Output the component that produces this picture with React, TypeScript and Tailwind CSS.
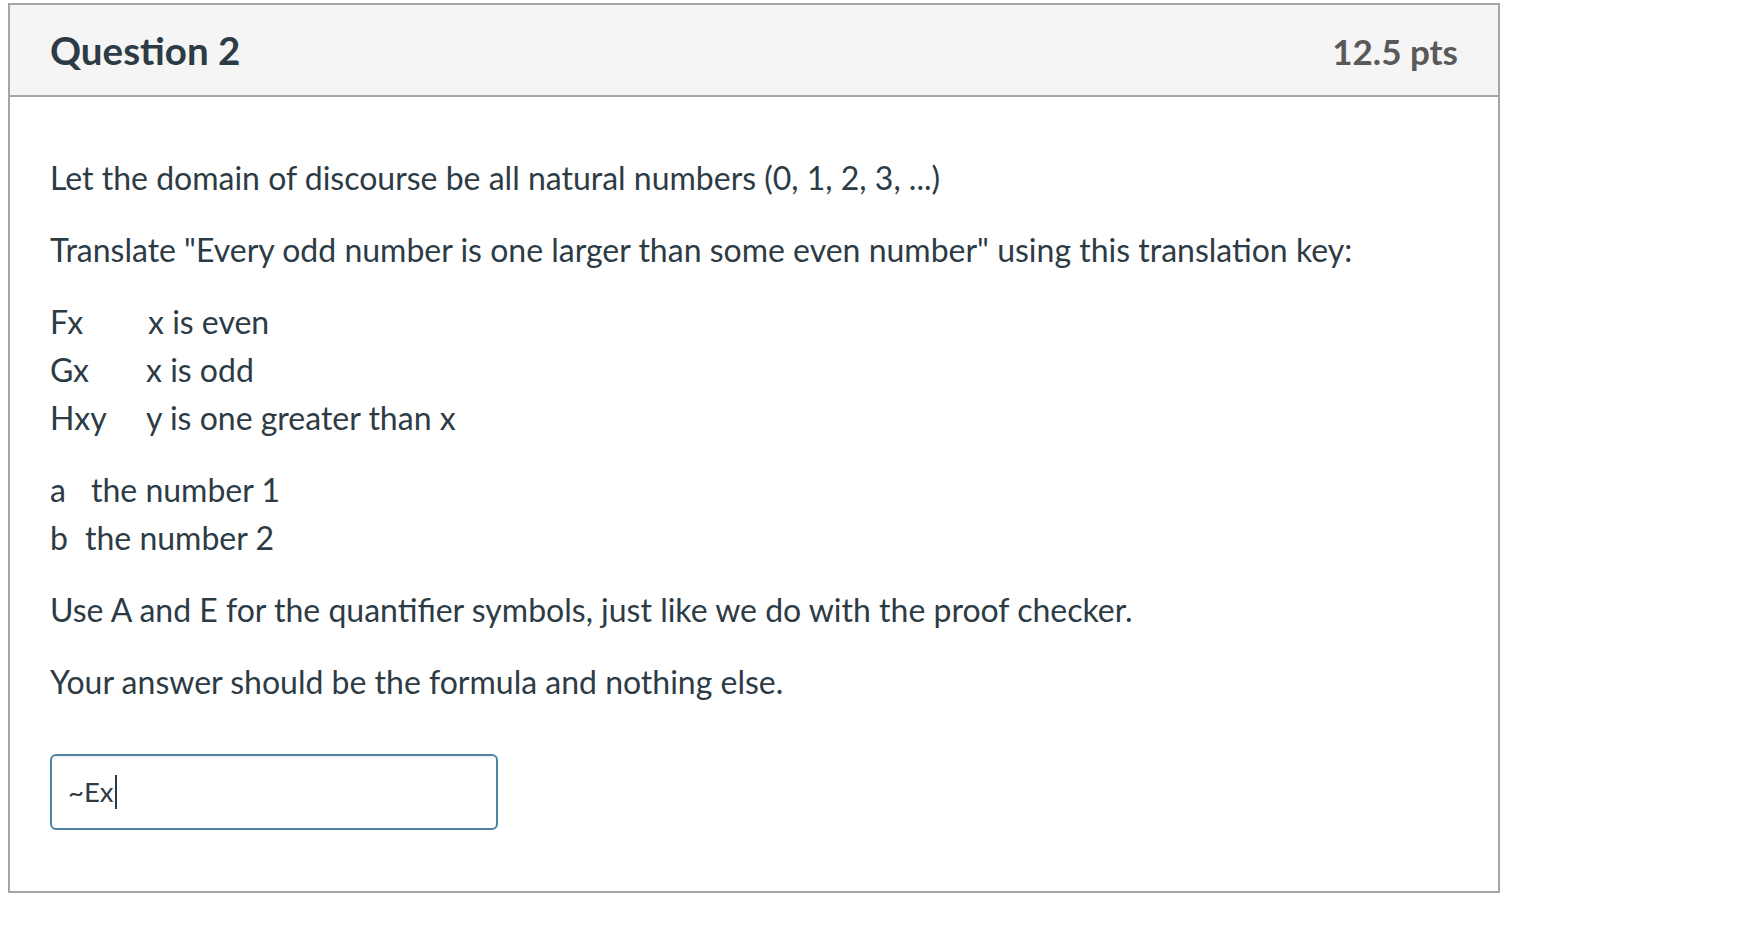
import React from "react";

export default function App() {
  return (
    <div className="min-h-[950px] w-[1760px] bg-white text-[#2d3b45]" style={{ fontFamily: "Lato, 'Open Sans', sans-serif" }}>
      <div className="pl-[8px] pt-[3px]">
        <div className="w-[1492px] border-2 border-[#a6a6a6] bg-white">
          <div className="flex h-[92px] items-center justify-between border-b-2 border-[#a6a6a6] bg-[#f5f5f5] px-[40px]">
            <h2 className="text-[38.5px] font-bold leading-none text-[#2d3b45]">Question 2</h2>
            <div className="pt-[2px] text-[35px] font-bold leading-none text-[#595959]">12.5 pts</div>
          </div>
          <div className="px-[40px] pt-[57px] pb-[61px] text-[32px] leading-[48px]">
            <p className="mb-[24px]">Let the domain of discourse be all natural numbers (0, 1, 2, 3, ...)</p>
            <p className="mb-[24px]">Translate "Every odd number is one larger than some even number" using this translation key:</p>
            <div className="mb-[24px]">
              <div className="flex"><span className="w-[98px]">Fx</span><span>x is even</span></div>
              <div className="flex"><span className="w-[96px]">Gx</span><span>x is odd</span></div>
              <div className="flex"><span className="w-[96px]">Hxy</span><span>y is one greater than x</span></div>
            </div>
            <div className="mb-[24px]">
              <div className="flex"><span className="w-[41px]">a</span><span>the number 1</span></div>
              <div className="flex"><span className="w-[35px]">b</span><span>the number 2</span></div>
            </div>
            <p className="mb-[24px]">Use A and E for the quantifier symbols, just like we do with the proof checker.</p>
            <p>Your answer should be the formula and nothing else.</p>
            <div className="mt-[48px] flex h-[76px] w-[448px] items-center rounded-[6px] border-2 border-[#4f83a6] bg-white px-[16px] shadow-[inset_0_2px_2px_rgba(0,0,0,0.06)]">
              <span className="text-[27.5px] leading-none text-[#2d3b45]">~Ex</span>
              <span className="ml-[1px] inline-block h-[34px] w-[2px] bg-[#2d3b45]"></span>
            </div>
          </div>
        </div>
      </div>
    </div>
  );
}
